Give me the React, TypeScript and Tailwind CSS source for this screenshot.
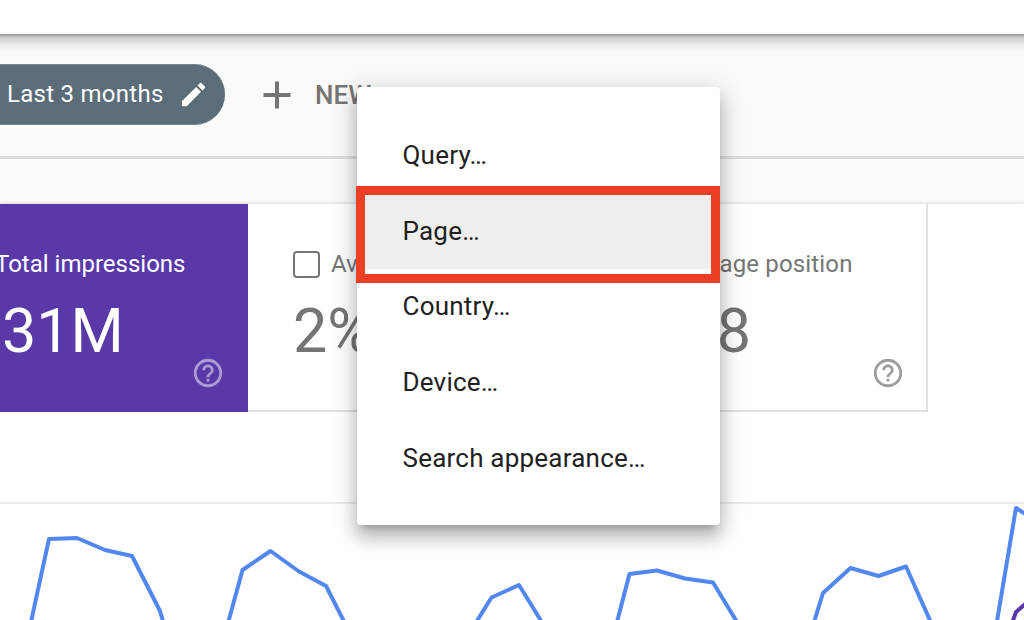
import { ReactNode } from "react";

const menuItems = ["Query…", "Page…", "Country…", "Device…", "Search appearance…"];

const HelpIcon = ({ className }: { className: string }) => (
  <svg viewBox="0 0 24 24" className={`h-[34px] w-[34px] fill-current ${className}`}>
    <path d="M11 18h2v-2h-2v2zm1-16C6.48 2 2 6.48 2 12s4.48 10 10 10 10-4.48 10-10S17.52 2 12 2zm0 18c-4.41 0-8-3.59-8-8s3.59-8 8-8 8 3.59 8 8-3.59 8-8 8zm0-14c-2.21 0-4 1.79-4 4h2c0-1.1.9-2 2-2s2 .9 2 2c0 2-3 1.75-3 5h2c0-2.25 3-2.5 3-5 0-2.21-1.79-4-4-4z" />
  </svg>
);

const Header = () => (
  <div className="relative z-10 -mx-6 h-[34px] shrink-0 bg-white shadow-[0_1px_2px_1px_rgba(0,0,0,0.2),0_3px_16px_1px_rgba(0,0,0,0.34)]" />
);

const FilterBar = () => (
  <div className="flex h-[125px] shrink-0 items-start border-b-[3px] border-[#dedede] pt-[30px]">
    <div className="flex h-[61px] w-[225px] items-center rounded-r-full border-y border-[#74858f] bg-[#5a6d78] pl-[7px] text-white">
      <span className="w-[171px] pb-0.5 text-[24px] tracking-[0.27px] whitespace-nowrap">Last 3 months</span>
      <svg viewBox="0 0 24 24" className="h-[31px] w-[31px] fill-current">
        <path d="M3 17.25V21h3.75L17.81 9.94l-3.75-3.75L3 17.25zM20.71 7.04c.39-.39.39-1.02 0-1.41l-2.34-2.34c-.39-.39-1.02-.39-1.41 0l-1.83 1.83 3.75 3.75 1.83-1.83z" />
      </svg>
    </div>
    <div className="ml-[38px] flex h-[61px] items-center text-[#757575]">
      <svg viewBox="0 0 28 28" className="h-7 w-7 stroke-current" strokeWidth="4">
        <path d="M14 0.5V27.5M0.5 14H27.5" />
      </svg>
      <span className="ml-6 pt-0.5 text-[26px] font-medium">NEW</span>
    </div>
  </div>
);

const Metric = ({ label, value, className, children }: { label: ReactNode; value: string; className: string; children?: ReactNode }) => (
  <div className={`relative h-[208px] shrink-0 pt-[44px] whitespace-nowrap ${className}`}>
    <div className="flex h-8 items-center text-[24px]">{label}</div>
    <div className="mt-[15px] text-[61px] leading-[72px]">{value}</div>
    {children}
  </div>
);

const Metrics = () => (
  <div className="flex h-[208px] shrink-0 text-[#757575]">
    <Metric label={<span className="-ml-[7px]">Total impressions</span>} value="31M" className="w-[247.500px] bg-[#5939a8] pl-[2px] text-white">
      <HelpIcon className="absolute top-[151.500px] left-[191px] text-[#ac9cd4]" />
    </Metric>
    <Metric
      label={
        <>
          <span className="h-[27px] w-[27px] rounded-[4px] border-2 border-[#757575]" />
          <span className="ml-[11px]">Average CTR</span>
        </>
      }
      value="2%"
      className="w-[339.500px] border-b-2 border-[#e0e0e0] pl-[45.500px]"
    />
    <Metric
      label={
        <>
          <span className="h-[27px] w-[27px] rounded-[4px] border-2 border-[#757575]" />
          <span className="ml-[13px] tracking-[0.15px]">Average position</span>
        </>
      }
      value="11.8"
      className="w-[341px] border-r-2 border-b-2 border-[#e0e0e0] pl-[45px]"
    >
      <HelpIcon className="absolute top-[151.500px] left-[284px] text-[#9e9e9e]" />
    </Metric>
  </div>
);

const Chart = () => (
  <svg viewBox="0 412 1024 208" className="h-[208px] w-full shrink-0" fill="none" strokeWidth="4" strokeLinejoin="round">
    <path d="M0 503H1024" stroke="#ebebeb" strokeWidth="2" />
    <path d="M1006 640L1016 612L1030 600" stroke="#5939a8" />
    <g stroke="#5187ee">
      <path d="M26 645L49 539L77 538L105 550L132 556L160 611L170 645" />
      <path d="M222 645L242.500 570L270.500 551L299 571.500L326 586L356 645" />
      <path d="M462 645L491.500 597.500L519 585L556 645" />
      <path d="M611 645L629.500 574L657 570.500L685 578.500L713 582.500L751 645" />
      <path d="M807 645L823 593L850.500 568L878.500 576L906 566.500L941 645" />
      <path d="M993 645L1016 508L1030 517" />
    </g>
  </svg>
);

const FilterMenu = () => (
  <div className="absolute top-[87px] left-[357px] z-20 h-[438px] w-[363px] rounded-[4px] bg-white pt-[31px] shadow-[0_8px_8px_-5px_rgba(0,0,0,0.22),0_13px_16px_2px_rgba(0,0,0,0.15),0_5px_24px_4px_rgba(0,0,0,0.14)]">
    {menuItems.map((item) => (
      <div
        key={item}
        className={`flex h-[75.600px] items-center pl-[45.500px] text-[26px] tracking-[0.22px] text-[#212121] ${item === "Page…" ? "bg-[#eeeeee]" : ""}`}
      >
        {item}
      </div>
    ))}
    {/* highlighted option */}
    <div className="absolute top-[99px] -left-px h-[96.500px] w-[364px] border-[9px] border-[#eb4026]" />
  </div>
);

const App = () => {
  return (
    <div className="relative flex h-[620px] w-[1024px] flex-col overflow-hidden bg-[#fafafa] font-['Roboto',sans-serif]">
      <Header />
      <FilterBar />
      <div className="mt-[45px] flex flex-col bg-white shadow-[0_0_4px_rgba(0,0,0,0.2)]">
        <Metrics />
        <Chart />
      </div>
      <FilterMenu />
    </div>
  );
};

export default App;
